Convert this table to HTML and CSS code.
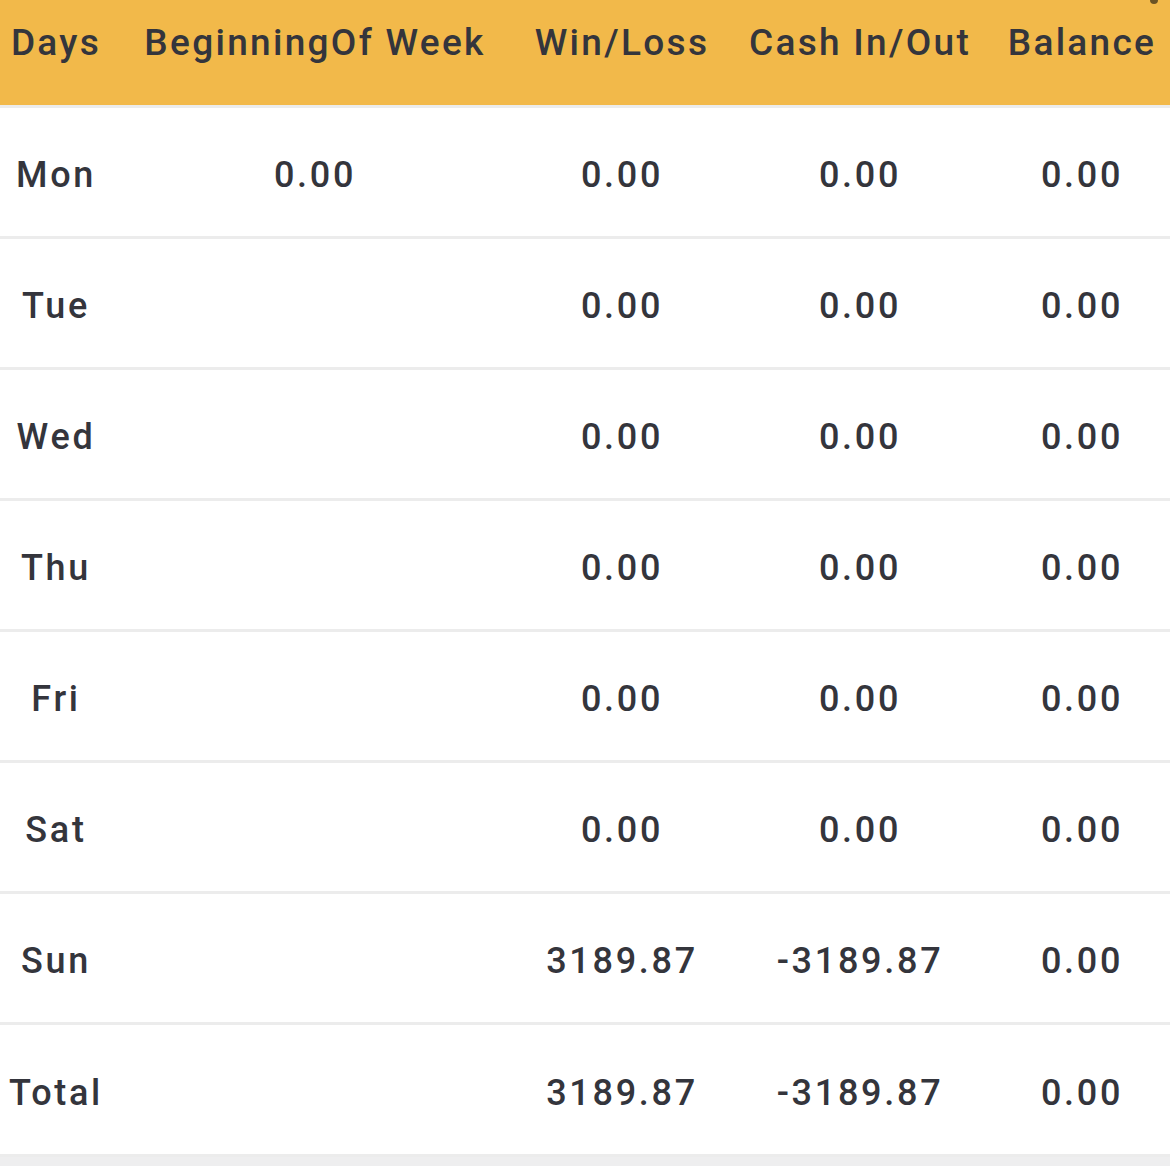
FILE: index.html
```html
<!DOCTYPE html>
<html>
<head>
<meta charset="utf-8">
<link rel="stylesheet" href="styles.css">
</head>
<body>
<div class="sheet">
  <div class="row head">
    <div class="cell">Days</div>
    <div class="cell">BeginningOf Week</div>
    <div class="cell">Win/Loss</div>
    <div class="cell">Cash In/Out</div>
    <div class="cell">Balance</div>
    <span class="dot"></span>
  </div>
  <div class="row"><div class="cell">Mon</div><div class="cell">0.00</div><div class="cell">0.00</div><div class="cell">0.00</div><div class="cell">0.00</div></div>
  <div class="row"><div class="cell">Tue</div><div class="cell"></div><div class="cell">0.00</div><div class="cell">0.00</div><div class="cell">0.00</div></div>
  <div class="row"><div class="cell">Wed</div><div class="cell"></div><div class="cell">0.00</div><div class="cell">0.00</div><div class="cell">0.00</div></div>
  <div class="row"><div class="cell">Thu</div><div class="cell"></div><div class="cell">0.00</div><div class="cell">0.00</div><div class="cell">0.00</div></div>
  <div class="row"><div class="cell">Fri</div><div class="cell"></div><div class="cell">0.00</div><div class="cell">0.00</div><div class="cell">0.00</div></div>
  <div class="row"><div class="cell">Sat</div><div class="cell"></div><div class="cell">0.00</div><div class="cell">0.00</div><div class="cell">0.00</div></div>
  <div class="row"><div class="cell">Sun</div><div class="cell"></div><div class="cell">3189.87</div><div class="cell">-3189.87</div><div class="cell">0.00</div></div>
  <div class="row"><div class="cell">Total</div><div class="cell"></div><div class="cell">3189.87</div><div class="cell">-3189.87</div><div class="cell">0.00</div></div>
</div>
</body>
</html>
```
FILE: styles.css
```css
html, body {
  margin: 0;
  padding: 0;
  background: #eeeeef;
}
body {
  width: 1170px;
  height: 1166px;
  overflow: hidden;
  font-family: Roboto, "Liberation Sans", sans-serif;
  color: #34353c;
}
.sheet {
  display: flex;
  flex-direction: column;
}
.row {
  display: grid;
  grid-template-columns: 112px 406px 208px 268px 176px;
  height: 128px;
  align-items: center;
  background: #ffffff;
  border-bottom: 3px solid #ececec;
  font-size: 36px;
  font-weight: 500;
  letter-spacing: 2.7px;
}
.row:last-child {
  height: 129px;
}
.cell {
  text-align: center;
  white-space: nowrap;
  padding-top: 6px;
}
.head {
  position: relative;
  height: 105px;
  background: #f2b94a;
  align-items: start;
  font-size: 37px;
  letter-spacing: 2.3px;
}
.head .cell {
  padding-top: 21px;
}
.dot {
  position: absolute;
  right: 12px;
  top: -4px;
  width: 8px;
  height: 8px;
  border-radius: 50%;
  background: #6b5325;
}
```
